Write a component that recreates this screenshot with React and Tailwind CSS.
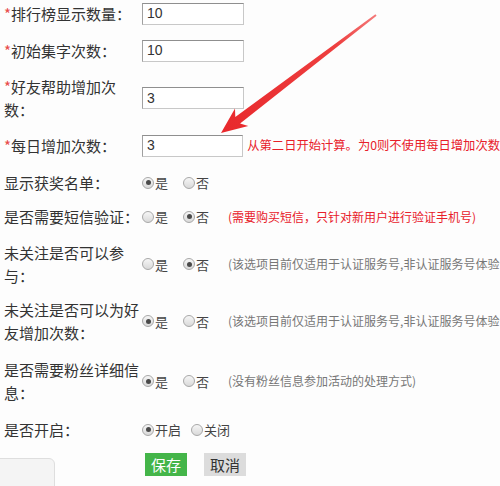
import React from "react";

const FONT = { fontFamily: '"Noto Sans CJK SC", "Noto Sans", sans-serif' };

function Radio({ checked, label, className = "" }) {
  return (
    <span className={"flex items-center " + className}>
      <span className="w-[12px] h-[12px] rounded-full border border-[#a8a8a8] bg-gradient-to-b from-[#f6f6f6] to-[#d9d9d9] flex items-center justify-center shrink-0">
        {checked && <span className="w-[5px] h-[5px] rounded-full bg-[#4a4a4a]" />}
      </span>
      <span className="ml-[1px] text-[13px] leading-[23px] text-[#444]">{label}</span>
    </span>
  );
}

function Label({ star, children }) {
  return (
    <div className="w-[138px] shrink-0 text-[15px] leading-[23px] text-[#333]">
      {star && <span className="text-[#e84a4a]">*</span>}
      {children}
    </div>
  );
}

function TextInput({ value }) {
  return (
    <div
      className="w-[102px] h-[22px] border border-[#c8c8c8] border-t-[#8f8f8f] border-l-[#a0a0a0] bg-white pl-[4px] flex items-center text-[14px] text-[#333]"
      style={{ fontFamily: '"Liberation Sans", Arial, sans-serif' }}
    >
      {value}
    </div>
  );
}

export default function App() {
  return (
    <div className="relative w-[500px] h-[486px] overflow-hidden bg-[#fdfdfd]" style={FONT}>
      <div className="flex flex-col pl-[4px] pt-[2px]">
        <div className="flex items-center">
          <Label star>排行榜显示数量：</Label>
          <TextInput value="10" />
        </div>
        <div className="flex items-center mt-[14px]">
          <Label star>初始集字次数：</Label>
          <TextInput value="10" />
        </div>
        <div className="flex items-center mt-[13px]">
          <Label star>好友帮助增加次数：</Label>
          <TextInput value="3" />
        </div>
        <div className="flex items-center mt-[13px]">
          <Label star>每日增加次数：</Label>
          <TextInput value="3" />
          <span className="ml-[4px] whitespace-nowrap text-[12.3px] text-[#e8202a]">
            从第二日开始计算。为0则不使用每日增加次数
          </span>
        </div>
        <div className="flex items-center mt-[14px]">
          <Label>显示获奖名单：</Label>
          <Radio checked label="是" />
          <Radio label="否" className="ml-[15px]" />
        </div>
        <div className="flex items-center mt-[11px]">
          <Label>是否需要短信验证：</Label>
          <Radio label="是" />
          <Radio checked label="否" className="ml-[15px]" />
          <span className="ml-[19px] whitespace-nowrap text-[12px] text-[#e8202a]">
            (需要购买短信，只针对新用户进行验证手机号)
          </span>
        </div>
        <div className="flex items-center mt-[13px]">
          <Label>未关注是否可以参与：</Label>
          <Radio label="是" />
          <Radio checked label="否" className="ml-[15px]" />
          <span className="ml-[19px] whitespace-nowrap text-[12px] text-[#777]">
            (该选项目前仅适用于认证服务号,非认证服务号体验号不可用)
          </span>
        </div>
        <div className="flex items-center mt-[11px]">
          <Label>未关注是否可以为好友增加次数：</Label>
          <Radio checked label="是" />
          <Radio label="否" className="ml-[15px]" />
          <span className="ml-[19px] whitespace-nowrap text-[12px] text-[#777]">
            (该选项目前仅适用于认证服务号,非认证服务号体验号不可用)
          </span>
        </div>
        <div className="flex items-center mt-[14px]">
          <Label>是否需要粉丝详细信息：</Label>
          <Radio checked label="是" />
          <Radio label="否" className="ml-[15px]" />
          <span className="ml-[19px] whitespace-nowrap text-[12px] text-[#777]">
            (没有粉丝信息参加活动的处理方式)
          </span>
        </div>
        <div className="flex items-center mt-[14px]">
          <Label>是否开启：</Label>
          <Radio checked label="开启" />
          <Radio label="关闭" className="ml-[10px]" />
        </div>
        <div className="flex items-center mt-[12px] pl-[141px]">
          <button className="w-[42px] h-[23px] bg-[#44b549] text-white text-[15px] leading-[23px] flex items-center justify-center">
            保存
          </button>
          <button className="ml-[17px] w-[42px] h-[23px] bg-[#dcdcdc] text-[#333] text-[15px] leading-[23px] flex items-center justify-center">
            取消
          </button>
        </div>
      </div>

      <div className="absolute -left-[1px] top-[458px] w-[56px] h-[40px] bg-[#f4f4f4] border border-[#dedede] rounded-tr-[6px]" />

      <svg className="absolute left-0 top-0 pointer-events-none" width="500" height="486" viewBox="0 0 500 486">
        <defs>
          <linearGradient id="arr" x1="376" y1="15" x2="221" y2="133" gradientUnits="userSpaceOnUse">
            <stop offset="0" stopColor="#f47a7a" />
            <stop offset="0.25" stopColor="#ee4040" />
            <stop offset="1" stopColor="#e8282c" />
          </linearGradient>
        </defs>
        <polygon
          points="221,133 248.3,126 240.1,123.5 376.6,15.8 375.4,14.2 235.3,117.1 235,108.5"
          fill="url(#arr)"
        />
      </svg>
    </div>
  );
}
